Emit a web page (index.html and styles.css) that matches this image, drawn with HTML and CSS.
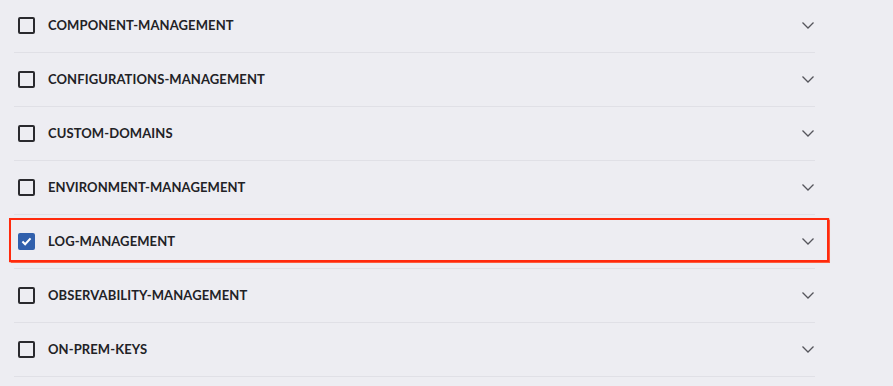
FILE: index.html
```html
<!DOCTYPE html>
<html lang="en">
<head>
    <meta charset="UTF-8">
    <meta name="viewport" content="width=device-width, initial-scale=1.0">
    <title>Permissions</title>
    <link rel="stylesheet" href="styles.css">
</head>
<body>
    <ul class="scope-list">
        <li class="scope-row">
            <span class="check"></span>
            <span class="scope-name">COMPONENT-MANAGEMENT</span>
            <svg class="chevron" viewBox="0 0 12 7"><path d="M0.5 0.5 L6 6 L11.5 0.5"/></svg>
        </li>
        <li class="scope-row">
            <span class="check"></span>
            <span class="scope-name">CONFIGURATIONS-MANAGEMENT</span>
            <svg class="chevron" viewBox="0 0 12 7"><path d="M0.5 0.5 L6 6 L11.5 0.5"/></svg>
        </li>
        <li class="scope-row">
            <span class="check"></span>
            <span class="scope-name">CUSTOM-DOMAINS</span>
            <svg class="chevron" viewBox="0 0 12 7"><path d="M0.5 0.5 L6 6 L11.5 0.5"/></svg>
        </li>
        <li class="scope-row">
            <span class="check"></span>
            <span class="scope-name">ENVIRONMENT-MANAGEMENT</span>
            <svg class="chevron" viewBox="0 0 12 7"><path d="M0.5 0.5 L6 6 L11.5 0.5"/></svg>
        </li>
        <li class="scope-row highlighted">
            <span class="check checked">
                <svg viewBox="0 0 12 10"><path d="M1.5 5 L4.5 8 L10.5 1.5"/></svg>
            </span>
            <span class="scope-name">LOG-MANAGEMENT</span>
            <svg class="chevron" viewBox="0 0 12 7"><path d="M0.5 0.5 L6 6 L11.5 0.5"/></svg>
        </li>
        <li class="scope-row">
            <span class="check"></span>
            <span class="scope-name">OBSERVABILITY-MANAGEMENT</span>
            <svg class="chevron" viewBox="0 0 12 7"><path d="M0.5 0.5 L6 6 L11.5 0.5"/></svg>
        </li>
        <li class="scope-row">
            <span class="check"></span>
            <span class="scope-name">ON-PREM-KEYS</span>
            <svg class="chevron" viewBox="0 0 12 7"><path d="M0.5 0.5 L6 6 L11.5 0.5"/></svg>
        </li>
    </ul>
</body>
</html>
```

FILE: styles.css
```css
body {
    margin: 0;
    background-color: #ededf2;
    font-family: Lato, "Liberation Sans", sans-serif;
    color: #222226;
}

.scope-list {
    list-style: none;
    margin: -1px 0 0 14px;
    padding: 0;
    width: 801px;
}

.scope-row {
    position: relative;
    display: flex;
    align-items: center;
    height: 53px;
    border-bottom: 1px solid #e0e0e6;
    padding: 0 1px 0 4px;
}

.check {
    box-sizing: border-box;
    width: 17px;
    height: 17px;
    border: 2px solid #2a2a2e;
    border-radius: 2px;
    display: flex;
    align-items: center;
    justify-content: center;
}

.check.checked {
    background-color: #3160ac;
    border-color: #3160ac;
}

.check svg {
    width: 11px;
    height: 9px;
    fill: none;
    stroke: #fff;
    stroke-width: 2.3;
}

.scope-name {
    margin-left: 13px;
    margin-bottom: 2px;
    flex: 1;
    font-size: 13px;
    font-weight: 700;
    letter-spacing: 0.1px;
}

.chevron {
    width: 12px;
    height: 7px;
    fill: none;
    stroke: #55555c;
    stroke-width: 1.3;
}

.highlighted::after {
    content: '';
    position: absolute;
    left: -5px;
    right: -14px;
    top: 3px;
    bottom: 6px;
    border: 2px solid #ff2a0d;
    box-shadow: 0 0 1px 0.5px #ff5a3c;
}
```
